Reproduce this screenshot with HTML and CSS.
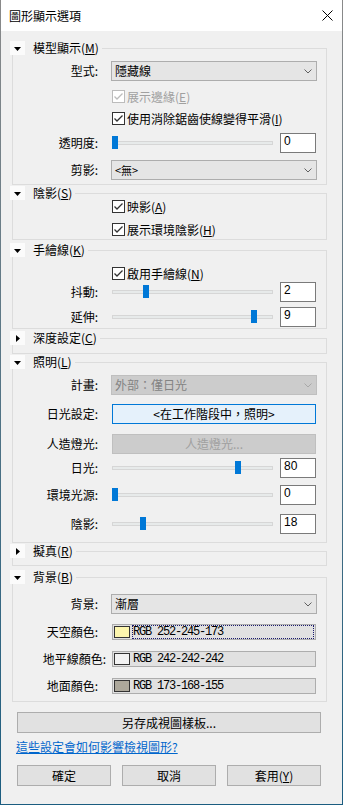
FILE: index.html
```html
<!DOCTYPE html>
<html lang="zh-Hant">
<head>
<meta charset="utf-8">
<title>圖形顯示選項</title>
<link rel="stylesheet" href="styles.css">
</head>
<body>
<div class="window">
  <div class="titlebar">
    <span class="title">圖形顯示選項</span>
    <svg class="close" width="11" height="11" viewBox="0 0 11 11"><path d="M0.5 0.5L10.5 10.5M10.5 0.5L0.5 10.5" stroke="#000" stroke-width="1" fill="none"/></svg>
  </div>
  <div class="content">

    <section class="group">
      <div class="group-head">
        <span class="toggle"><svg class="tri-down" width="7" height="4" viewBox="0 0 7 4"><path d="M0 0H7L3.5 4Z"/></svg></span>
        <span class="group-title">模型顯示(<u>M</u>)</span>
        <span class="group-line"></span>
      </div>
      <div class="group-body pb-4">
        <div class="row mt-6">
          <span class="label">型式:</span>
          <div class="dropdown"><span>隱藏線</span><svg width="8" height="5" viewBox="0 0 8 5"><path d="M0.5 0.5L4 4L7.5 0.5" fill="none" stroke="#606060"/></svg></div>
        </div>
        <div class="check-row mt-9 disabled">
          <span class="checkbox"><svg width="11" height="11" viewBox="0 0 11 11"><path d="M1.5 5.5L4 8L9.5 2.5" fill="none" stroke="#bcbcbc" stroke-width="1.3"/></svg></span>
          <span class="check-label">展示邊緣(<u>E</u>)</span>
        </div>
        <div class="check-row mt-9">
          <span class="checkbox"><svg width="11" height="11" viewBox="0 0 11 11"><path d="M1.5 5.5L4 8L9.5 2.5" fill="none" stroke="#333" stroke-width="1.3"/></svg></span>
          <span class="check-label">使用消除鋸齒使線變得平滑(<u>I</u>)</span>
        </div>
        <div class="row mt-8">
          <span class="label">透明度:</span>
          <div class="slider"><span class="track"></span><span class="thumb" style="left:0px"></span></div>
          <span class="textbox">0</span>
        </div>
        <div class="row mt-7">
          <span class="label">剪影:</span>
          <div class="dropdown"><span class="small">&lt;無&gt;</span><svg width="8" height="5" viewBox="0 0 8 5"><path d="M0.5 0.5L4 4L7.5 0.5" fill="none" stroke="#606060"/></svg></div>
        </div>
      </div>
    </section>

    <section class="group mt-1">
      <div class="group-head">
        <span class="toggle"><svg class="tri-down" width="7" height="4" viewBox="0 0 7 4"><path d="M0 0H7L3.5 4Z"/></svg></span>
        <span class="group-title">陰影(<u>S</u>)</span>
        <span class="group-line"></span>
      </div>
      <div class="group-body pb-3">
        <div class="check-row">
          <span class="checkbox"><svg width="11" height="11" viewBox="0 0 11 11"><path d="M1.5 5.5L4 8L9.5 2.5" fill="none" stroke="#333" stroke-width="1.3"/></svg></span>
          <span class="check-label">映影(<u>A</u>)</span>
        </div>
        <div class="check-row mt-10">
          <span class="checkbox"><svg width="11" height="11" viewBox="0 0 11 11"><path d="M1.5 5.5L4 8L9.5 2.5" fill="none" stroke="#333" stroke-width="1.3"/></svg></span>
          <span class="check-label">展示環境陰影(<u>H</u>)</span>
        </div>
      </div>
    </section>

    <section class="group mt-3">
      <div class="group-head">
        <span class="toggle"><svg class="tri-down" width="7" height="4" viewBox="0 0 7 4"><path d="M0 0H7L3.5 4Z"/></svg></span>
        <span class="group-title">手繪線(<u>K</u>)</span>
        <span class="group-line"></span>
      </div>
      <div class="group-body pb-1">
        <div class="check-row mt-10">
          <span class="checkbox"><svg width="11" height="11" viewBox="0 0 11 11"><path d="M1.5 5.5L4 8L9.5 2.5" fill="none" stroke="#333" stroke-width="1.3"/></svg></span>
          <span class="check-label">啟用手繪線(<u>N</u>)</span>
        </div>
        <div class="row mt-2">
          <span class="label">抖動:</span>
          <div class="slider"><span class="track"></span><span class="thumb" style="left:31px"></span></div>
          <span class="textbox">2</span>
        </div>
        <div class="row mt-5">
          <span class="label">延伸:</span>
          <div class="slider"><span class="track"></span><span class="thumb" style="left:139px"></span></div>
          <span class="textbox">9</span>
        </div>
      </div>
    </section>

    <section class="group mt-2">
      <div class="group-head">
        <span class="toggle"><svg class="tri-right" width="4" height="7" viewBox="0 0 4 7"><path d="M0 0L4 3.5L0 7Z"/></svg></span>
        <span class="group-title">深度設定(<u>C</u>)</span>
        <span class="group-line"></span>
      </div>
      <div class="group-body collapsed-8"></div>
    </section>

    <section class="group mt-1">
      <div class="group-head">
        <span class="toggle"><svg class="tri-down" width="7" height="4" viewBox="0 0 7 4"><path d="M0 0H7L3.5 4Z"/></svg></span>
        <span class="group-title">照明(<u>L</u>)</span>
        <span class="group-line"></span>
      </div>
      <div class="group-body pb-8">
        <div class="row mt-6">
          <span class="label">計畫:</span>
          <div class="dropdown is-disabled"><span>外部：僅日光</span><svg width="8" height="5" viewBox="0 0 8 5"><path d="M0.5 0.5L4 4L7.5 0.5" fill="none" stroke="#a8a8a8"/></svg></div>
        </div>
        <div class="row mt-9">
          <span class="label">日光設定:</span>
          <div class="wide-btn focused">&lt;在工作階段中，照明&gt;</div>
        </div>
        <div class="row mt-10">
          <span class="label">人造燈光:</span>
          <div class="wide-btn is-disabled">人造燈光...</div>
        </div>
        <div class="row mt-4">
          <span class="label">日光:</span>
          <div class="slider"><span class="track"></span><span class="thumb" style="left:123px"></span></div>
          <span class="textbox">80</span>
        </div>
        <div class="row mt-7">
          <span class="label">環境光源:</span>
          <div class="slider"><span class="track"></span><span class="thumb" style="left:0px"></span></div>
          <span class="textbox">0</span>
        </div>
        <div class="row mt-9">
          <span class="label">陰影:</span>
          <div class="slider"><span class="track"></span><span class="thumb" style="left:28px"></span></div>
          <span class="textbox">18</span>
        </div>
      </div>
    </section>

    <section class="group mt-1">
      <div class="group-head">
        <span class="toggle"><svg class="tri-right" width="4" height="7" viewBox="0 0 4 7"><path d="M0 0L4 3.5L0 7Z"/></svg></span>
        <span class="group-title">擬真(<u>R</u>)</span>
        <span class="group-line"></span>
      </div>
      <div class="group-body collapsed-7"></div>
    </section>

    <section class="group mt-4">
      <div class="group-head">
        <span class="toggle"><svg class="tri-down" width="7" height="4" viewBox="0 0 7 4"><path d="M0 0H7L3.5 4Z"/></svg></span>
        <span class="group-title">背景(<u>B</u>)</span>
        <span class="group-line"></span>
      </div>
      <div class="group-body pb-7">
        <div class="row mt-10">
          <span class="label">背景:</span>
          <div class="dropdown"><span>漸層</span><svg width="8" height="5" viewBox="0 0 8 5"><path d="M0.5 0.5L4 4L7.5 0.5" fill="none" stroke="#606060"/></svg></div>
        </div>
        <div class="row color-row mt-10">
          <span class="label">天空顏色:</span>
          <div class="color-field"><span class="swatch" style="background:rgb(252,245,173)"></span><span class="rgb focus">RGB 252-245-173</span></div>
        </div>
        <div class="row color-row mt-11">
          <span class="label label-wide">地平線顏色:</span>
          <div class="color-field"><span class="swatch" style="background:rgb(242,242,242)"></span><span class="rgb">RGB 242-242-242</span></div>
        </div>
        <div class="row color-row mt-11">
          <span class="label">地面顏色:</span>
          <div class="color-field"><span class="swatch" style="background:rgb(173,168,155)"></span><span class="rgb">RGB 173-168-155</span></div>
        </div>
      </div>
    </section>

    <div class="btn save-btn">另存成視圖樣板...</div>
    <a class="help-link">這些設定會如何影響檢視圖形?</a>
    <div class="button-row">
      <div class="btn">確定</div>
      <div class="btn">取消</div>
      <div class="btn">套用(<u>Y</u>)</div>
    </div>
  </div>
</div>
</body>
</html>
```

FILE: styles.css
```css
* { box-sizing: border-box; }
html, body { margin: 0; padding: 0; }
body {
  width: 343px;
  height: 805px;
  font-family: "Noto Sans CJK TC", "Noto Sans", sans-serif;
  font-size: 12px;
  line-height: 14px;
  color: #000;
  background: #fff;
  overflow: hidden;
}
u { text-decoration: underline; text-underline-offset: 1px; }

.window {
  width: 343px;
  height: 805px;
  border: 1px solid transparent;
  border-top: 0;
  border-image: linear-gradient(#8a8a8a, #1b5d80) 1;
  display: flex;
  flex-direction: column;
  background: #f0f0f0;
}
.titlebar {
  height: 31px;
  flex: none;
  background: #fff;
  display: flex;
  align-items: center;
  padding-left: 8px;
}
.title { font-size: 12px; }
.close { margin-left: auto; margin-right: 9px; }

.content {
  flex: 1;
  padding: 10px 0 0 9px;
  display: flex;
  flex-direction: column;
  align-items: flex-start;
}

.group { width: 317px; }
.group-head {
  display: flex;
  align-items: center;
  height: 14px;
}
.toggle {
  width: 15px;
  height: 14px;
  flex: none;
  background: #fbfbfb;
  display: flex;
  align-items: center;
  justify-content: center;
}
.tri-down { margin-top: 2px; }
.toggle svg path { fill: #000; }
.group-title { margin-left: 8px; white-space: nowrap; }
.group-line {
  flex: 1;
  align-self: flex-end;
  height: 7px;
  margin-left: 3px;
  border-top: 1px solid #dcdcdc;
  border-right: 1px solid #dcdcdc;
}
.group-body {
  margin-left: 2px;
  border: 1px solid #dcdcdc;
  border-top: 0;
  display: flex;
  flex-direction: column;
}
.collapsed-8 { height: 9px; }
.collapsed-7 { height: 8px; }

.row {
  display: flex;
  align-items: center;
  height: 20px;
}
.color-row { height: 16px; }
.label {
  width: 85px;
  margin-right: 14px;
  text-align: right;
  white-space: nowrap;
  flex: none;
}
.label-wide { width: 93px; margin-right: 6px; }

.dropdown {
  width: 206px;
  height: 20px;
  margin-left: -1px;
  background: #e5e5e5;
  border: 1px solid #adadad;
  display: flex;
  align-items: center;
  justify-content: space-between;
  padding: 0 4px 0 3px;
}
.dropdown .small { font-size: 11px; }
.dropdown.is-disabled {
  background: #cccccc;
  border-color: #bfbfbf;
  color: #838383;
}

.check-row {
  display: flex;
  align-items: center;
  height: 13px;
  padding-left: 99px;
}
.checkbox {
  width: 13px;
  height: 13px;
  border: 1px solid #333;
  background: #fff;
  flex: none;
  display: flex;
}
.check-label { margin-left: 2px; white-space: nowrap; }
.check-row.disabled .checkbox { border-color: #bcbcbc; }
.check-row.disabled .check-label { color: #a0a0a0; }

.slider {
  position: relative;
  width: 161px;
  height: 20px;
  flex: none;
}
.track {
  position: absolute;
  left: 0;
  right: 0;
  top: 8px;
  height: 4px;
  background: #e7eaea;
  border: 1px solid #d6d6d6;
}
.thumb {
  position: absolute;
  top: 3px;
  width: 6px;
  height: 13px;
  background: #0078d7;
}
.textbox {
  width: 36px;
  height: 20px;
  margin-left: 7px;
  background: #fff;
  border: 1px solid #7a7a7a;
  padding-left: 3px;
  font-family: "Liberation Sans", sans-serif;
  font-size: 12px;
  line-height: 14px;
}

.wide-btn {
  width: 204px;
  height: 20px;
  background: #e1e1e1;
  border: 1px solid #adadad;
  display: flex;
  align-items: center;
  justify-content: center;
  white-space: nowrap;
}
.wide-btn.focused {
  background: #e5f1fb;
  border-color: #0078d7;
}
.wide-btn.is-disabled {
  background: #cccccc;
  border-color: #bfbfbf;
  color: #a0a0a0;
}

.color-field {
  width: 204px;
  height: 16px;
  background: #e1e1e1;
  border: 1px solid #adadad;
  display: flex;
  align-items: center;
  padding-left: 1px;
}
.swatch {
  width: 16px;
  height: 12px;
  border: 1px solid #333;
  flex: none;
}
.rgb {
  margin-left: 2px;
  padding-left: 1px;
  height: 14px;
  width: 182px;
  font-family: "Liberation Mono", monospace;
  font-size: 12px;
  letter-spacing: -1.2px;
  line-height: 14px;
}
.rgb.focus { outline: 1px dotted #1a1a6e; outline-offset: -1px; }

.btn {
  height: 21px;
  background: #e1e1e1;
  border: 1px solid #adadad;
  display: flex;
  align-items: center;
  justify-content: center;
  white-space: nowrap;
}
.save-btn { width: 304px; margin: 10px 0 0 7px; }
.help-link {
  margin: 7px 0 0 6px;
  color: #0066cc;
  text-decoration: underline;
  cursor: pointer;
}
.button-row {
  display: flex;
  gap: 11px;
  margin: 11px 0 0 7px;
}
.button-row .btn { width: 94px; }

.mt-1 { margin-top: 1px; }
.mt-2 { margin-top: 2px; }
.mt-3 { margin-top: 3px; }
.mt-4 { margin-top: 4px; }
.mt-5 { margin-top: 5px; }
.mt-6 { margin-top: 6px; }
.mt-7 { margin-top: 7px; }
.mt-8 { margin-top: 8px; }
.mt-9 { margin-top: 9px; }
.mt-10 { margin-top: 10px; }
.mt-11 { margin-top: 11px; }
.pb-1 { padding-bottom: 1px; }
.pb-3 { padding-bottom: 3px; }
.pb-4 { padding-bottom: 4px; }
.pb-7 { padding-bottom: 7px; }
.pb-8 { padding-bottom: 8px; }
```
